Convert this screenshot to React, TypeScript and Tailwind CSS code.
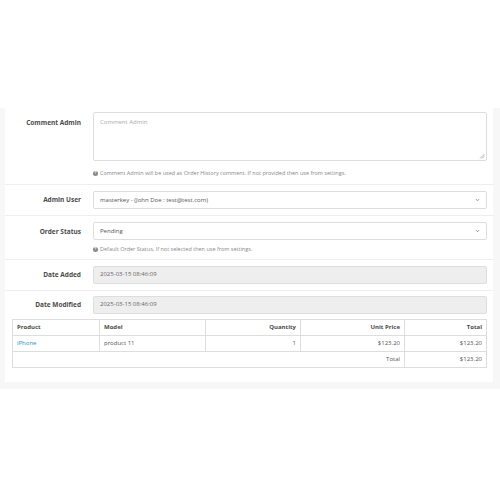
export default function App() {
  const font = { fontFamily: '"Open Sans", "Liberation Sans", sans-serif' };
  return (
    <div className="w-[500px] h-[500px] bg-white" style={font}>
      <div className="h-[108px]" />
      <div className="bg-[#f7f7f7] pl-[5px] pr-[7px] pb-[7px]">
        <div className="bg-white pb-[14px]">
          {/* Comment Admin */}
          <div className="flex border-b border-[#eeeeee] pt-[4px] pb-[7px]">
            <div className="w-[76px] shrink-0 text-right text-[6.5px] font-bold text-[#4a4a4a] pt-[6px]">Comment Admin</div>
            <div className="ml-[12px] w-[394px]">
              <div className="relative h-[49px] border border-[#dddddd] rounded-[2px] px-[6px] py-[5px] text-[6px] text-[#aaa]">
                Comment Admin
                <svg className="absolute right-[1px] bottom-[1px]" width="6" height="6" viewBox="0 0 6 6">
                  <path d="M5.5 1 L1 5.5 M5.5 3 L3 5.5" stroke="#999" strokeWidth="0.7" />
                </svg>
              </div>
              <div className="mt-[8px] text-[5.5px] text-[#888] flex items-center gap-[2px]">
                <span className="inline-flex w-[5px] h-[5px] rounded-full bg-[#888] text-white text-[4px] font-bold items-center justify-center leading-none">?</span>
                Comment Admin will be used as Order History comment. If not provided then use from settings.
              </div>
            </div>
          </div>
          {/* Admin User */}
          <div className="flex items-center border-b border-[#eeeeee] py-[6px]">
            <div className="w-[76px] shrink-0 text-right text-[6.5px] font-bold text-[#4a4a4a]">Admin User</div>
            <div className="ml-[12px] w-[394px] h-[18px] border border-[#dddddd] rounded-[2px] px-[6px] flex items-center justify-between text-[6px] text-[#555]">
              <span>masterkey - (John Doe : test@test.com)</span>
              <svg width="5" height="4" viewBox="0 0 5 4"><path d="M0.8 1 L2.5 2.8 L4.2 1" stroke="#777" strokeWidth="0.7" fill="none" /></svg>
            </div>
          </div>
          {/* Order Status */}
          <div className="flex border-b border-[#eeeeee] pt-[6px] pb-[5px]">
            <div className="w-[76px] shrink-0 text-right text-[6.5px] font-bold text-[#4a4a4a] pt-[5px]">Order Status</div>
            <div className="ml-[12px] w-[394px]">
              <div className="h-[18px] border border-[#dddddd] rounded-[2px] px-[6px] flex items-center justify-between text-[6px] text-[#555]">
                <span>Pending</span>
                <svg width="5" height="4" viewBox="0 0 5 4"><path d="M0.8 1 L2.5 2.8 L4.2 1" stroke="#777" strokeWidth="0.7" fill="none" /></svg>
              </div>
              <div className="mt-[5px] text-[5.5px] text-[#888] flex items-center gap-[2px]">
                <span className="inline-flex w-[5px] h-[5px] rounded-full bg-[#888] text-white text-[4px] font-bold items-center justify-center leading-none">?</span>
                Default Order Status, If not selected then use from settings.
              </div>
            </div>
          </div>
          {/* Date Added */}
          <div className="flex items-center border-b border-[#eeeeee] py-[6px]">
            <div className="w-[76px] shrink-0 text-right text-[6.5px] font-bold text-[#4a4a4a]">Date Added</div>
            <div className="ml-[12px] w-[394px] h-[18px] border border-[#dddddd] bg-[#eeeeee] rounded-[2px] px-[6px] flex items-center text-[6px] text-[#666]">
              2025-03-15 08:46:09
            </div>
          </div>
          {/* Date Modified */}
          <div className="flex items-center pt-[5px] pb-[5px]">
            <div className="w-[76px] shrink-0 text-right text-[6.5px] font-bold text-[#4a4a4a]">Date Modified</div>
            <div className="ml-[12px] w-[394px] h-[18px] border border-[#dddddd] bg-[#eeeeee] rounded-[2px] px-[6px] flex items-center text-[6px] text-[#666]">
              2025-03-15 08:46:09
            </div>
          </div>
          {/* Products table */}
          <div className="px-[7px]">
            <table className="w-[475px] border-collapse text-[6px] text-[#555]">
              <thead>
                <tr className="h-[16px]">
                  <th className="w-[87px] border border-[#dddddd] px-[4px] py-0 text-left font-bold text-[#4a4a4a]">Product</th>
                  <th className="w-[106px] border border-[#dddddd] px-[4px] py-0 text-left font-bold text-[#4a4a4a]">Model</th>
                  <th className="w-[95px] border border-[#dddddd] px-[4px] py-0 text-right font-bold text-[#4a4a4a]">Quantity</th>
                  <th className="w-[104px] border border-[#dddddd] px-[4px] py-0 text-right font-bold text-[#4a4a4a]">Unit Price</th>
                  <th className="border border-[#dddddd] px-[4px] py-0 text-right font-bold text-[#4a4a4a]">Total</th>
                </tr>
              </thead>
              <tbody>
                <tr className="h-[16px]">
                  <td className="border border-[#dddddd] px-[4px] py-0 text-[#1e91cf]">iPhone</td>
                  <td className="border border-[#dddddd] px-[4px] py-0">product 11</td>
                  <td className="border border-[#dddddd] px-[4px] py-0 text-right">1</td>
                  <td className="border border-[#dddddd] px-[4px] py-0 text-right">$123.20</td>
                  <td className="border border-[#dddddd] px-[4px] py-0 text-right">$123.20</td>
                </tr>
                <tr className="h-[16px]">
                  <td colSpan={4} className="border border-[#dddddd] px-[4px] py-0 text-right">Total</td>
                  <td className="border border-[#dddddd] px-[4px] py-0 text-right">$123.20</td>
                </tr>
              </tbody>
            </table>
          </div>
        </div>
      </div>
    </div>
  );
}
